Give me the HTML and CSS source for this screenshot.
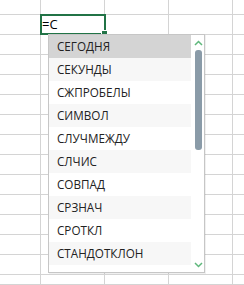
FILE: index.html
```html
<!DOCTYPE html>
<html lang="ru">
<head>
<meta charset="utf-8">
<link rel="stylesheet" href="styles.css">
</head>
<body>
<div class="sheet">
  <div class="cell"></div><div class="cell"></div><div class="cell"></div><div class="cell"></div><div class="cell"></div>
  <div class="cell"></div><div class="cell active"><span class="entry">=С</span><div class="sel"><div class="handle"></div></div></div><div class="cell"></div><div class="cell"></div><div class="cell"></div>
  <div class="cell"></div><div class="cell"></div><div class="cell"></div><div class="cell"></div><div class="cell"></div>
  <div class="cell"></div><div class="cell"></div><div class="cell"></div><div class="cell"></div><div class="cell"></div>
  <div class="cell"></div><div class="cell"></div><div class="cell"></div><div class="cell"></div><div class="cell"></div>
  <div class="cell"></div><div class="cell"></div><div class="cell"></div><div class="cell"></div><div class="cell"></div>
  <div class="cell"></div><div class="cell"></div><div class="cell"></div><div class="cell"></div><div class="cell"></div>
  <div class="cell"></div><div class="cell"></div><div class="cell"></div><div class="cell"></div><div class="cell"></div>
  <div class="cell"></div><div class="cell"></div><div class="cell"></div><div class="cell"></div><div class="cell"></div>
  <div class="cell"></div><div class="cell"></div><div class="cell"></div><div class="cell"></div><div class="cell"></div>
  <div class="cell"></div><div class="cell"></div><div class="cell"></div><div class="cell"></div><div class="cell"></div>
  <div class="cell"></div><div class="cell"></div><div class="cell"></div><div class="cell"></div><div class="cell"></div>
  <div class="cell"></div><div class="cell"></div><div class="cell"></div><div class="cell"></div><div class="cell"></div>
  <div class="cell"></div><div class="cell"></div><div class="cell"></div><div class="cell"></div><div class="cell"></div>
  <div class="cell"></div><div class="cell"></div><div class="cell"></div><div class="cell"></div><div class="cell"></div>
</div>

<div class="dropdown">
  <ul class="list">
    <li class="item selected">СЕГОДНЯ</li>
    <li class="item">СЕКУНДЫ</li>
    <li class="item">СЖПРОБЕЛЫ</li>
    <li class="item">СИМВОЛ</li>
    <li class="item">СЛУЧМЕЖДУ</li>
    <li class="item">СЛЧИС</li>
    <li class="item">СОВПАД</li>
    <li class="item">СРЗНАЧ</li>
    <li class="item">СРОТКЛ</li>
    <li class="item">СТАНДОТКЛОН</li>
  </ul>
  <div class="scrollbar">
    <svg class="arrow" width="9" height="6" viewBox="0 0 9 6"><path d="M1 5 L4.5 1.5 L8 5" fill="none" stroke="#5fb87c" stroke-width="1.5"/></svg>
    <div class="track"><div class="thumb"></div></div>
    <svg class="arrow" width="9" height="6" viewBox="0 0 9 6"><path d="M1 1 L4.5 4.5 L8 1" fill="none" stroke="#5fb87c" stroke-width="1.5"/></svg>
  </div>
</div>
</body>
</html>
```

FILE: styles.css
```css
html, body {
  margin: 0;
  padding: 0;
  background: #ffffff;
  overflow: hidden;
}
body {
  width: 244px;
  height: 285px;
  position: relative;
  font-family: "Open Sans", "Noto Sans", sans-serif;
}
.sheet {
  display: grid;
  grid-template-columns: 41px 64px 64px 64px 11px;
  grid-template-rows: 15px repeat(13, 20px) 10px;
  width: 244px;
  height: 285px;
}
.cell {
  box-sizing: border-box;
  border-right: 1px solid #d4d4d4;
  border-bottom: 1px solid #d4d4d4;
  position: relative;
}
.cell:nth-child(5n) {
  border-right: none;
}
.active {
  display: flex;
  align-items: center;
}
.entry {
  font-family: "Open Sans", sans-serif;
  font-size: 13px;
  color: #000;
  padding-left: 1px;
  line-height: 19px;
}
.sel {
  position: absolute;
  left: -1px;
  top: -1px;
  width: 66px;
  height: 21px;
  box-sizing: border-box;
  border: 2px solid #217346;
}
.handle {
  position: absolute;
  right: -3px;
  bottom: -3px;
  width: 5px;
  height: 5px;
  background: #217346;
  border-left: 1px solid #fff;
  border-top: 1px solid #fff;
}
.dropdown {
  position: absolute;
  left: 48px;
  top: 34px;
  width: 157px;
  height: 239px;
  box-sizing: border-box;
  border: 1px solid #c6c6c6;
  background: #fff;
  display: flex;
  box-shadow: 1px 1px 0 rgba(0,0,0,0.06);
}
.list {
  list-style: none;
  margin: 0;
  padding: 0;
  width: 142px;
}
.item {
  height: 23px;
  line-height: 23px;
  padding-left: 8px;
  font-size: 11.7px;
  color: #222222;
  white-space: nowrap;
  overflow: hidden;
}
.item:nth-child(even) {
  background: #f7f7f7;
}
.item.selected {
  background: #d4d4d4;
}
.scrollbar {
  flex: 1;
  display: flex;
  flex-direction: column;
  align-items: center;
  padding: 5px 0 4px 1px;
}
.arrow {
  display: block;
  flex: none;
}
.track {
  flex: 1;
  width: 100%;
  display: flex;
  justify-content: center;
  padding-top: 4px;
}
.thumb {
  width: 7px;
  height: 100px;
  border-radius: 3px;
  background: #8a9ba8;
}
```
